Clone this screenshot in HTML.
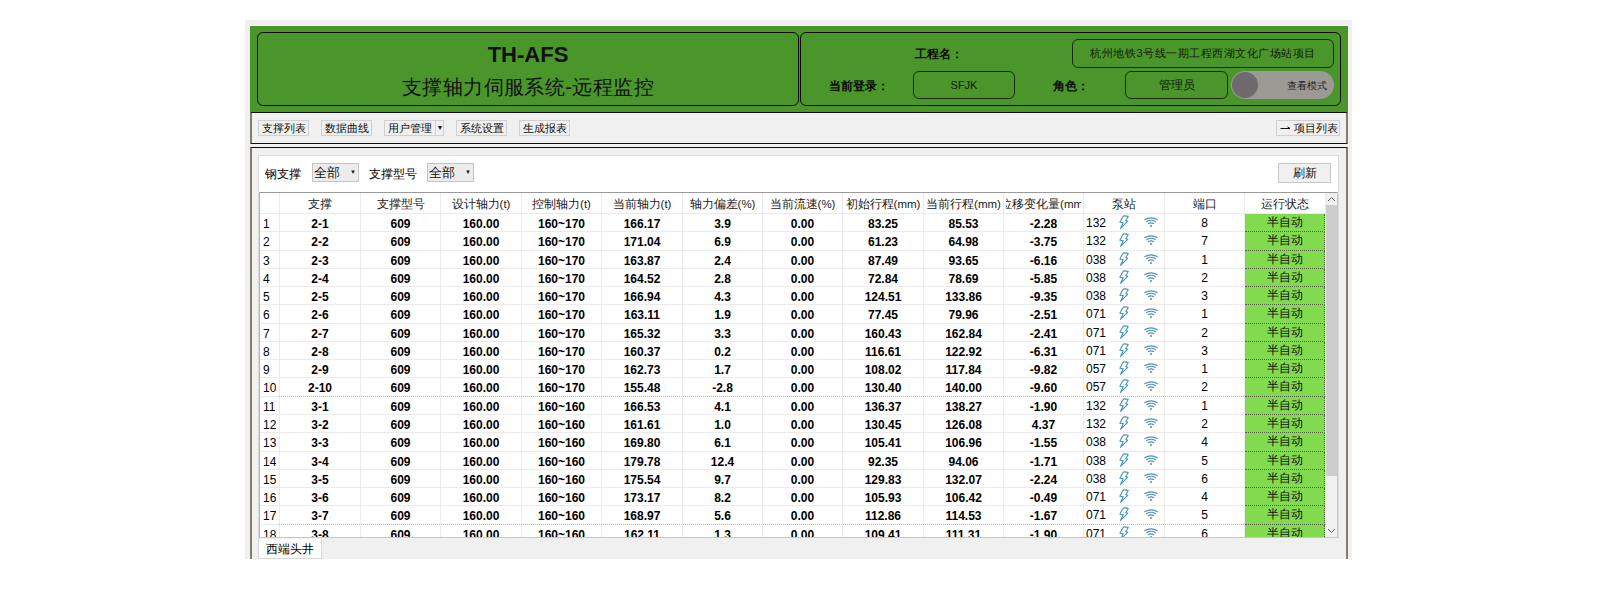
<!DOCTYPE html>
<html><head><meta charset="utf-8">
<style>
*{box-sizing:border-box;margin:0;padding:0}
html,body{width:1600px;height:589px;overflow:hidden;background:#fff;font-family:"Liberation Sans",sans-serif;color:#000}
.a{position:absolute}
.win{left:245px;top:20px;width:1107px;height:539px;background:#f0f0f0}
.green{left:250px;top:25px;width:1098px;height:88px;background:#4a962b;border-top:1px solid #fafafa}
.rbox{border:1.6px solid #0a0a0a;border-radius:6px}
.tbox{border:1px solid #1a2a10;border-radius:6px;text-align:center;font-size:12px;color:#101a0a}
.lbl{font-size:12px;font-weight:bold;color:#0a0a0a;white-space:nowrap}
.btn{height:16px;background:#f0f0f0;border:1px solid #d0d0d0;font-size:11px;line-height:14px;text-align:center;color:#111;white-space:nowrap}
.cell{position:absolute;text-align:center;font-size:12px;white-space:nowrap;overflow:hidden}
.num{font-weight:bold}
.hd{font-size:11.5px;color:#222}
.gl{position:absolute;background:#ebebeb}
svg{display:block}
</style></head><body>
<div class="a win"></div>
<div class="a green"></div>
<div class="a rbox" style="left:257px;top:32px;width:542px;height:74px"></div>
<div class="a rbox" style="left:800px;top:32px;width:541px;height:74px"></div>
<div class="a" style="left:257px;top:42px;width:542px;text-align:center;font-size:22px;font-weight:bold;color:#111">TH-AFS</div>
<div class="a" style="left:257px;top:74px;width:542px;text-align:center;font-size:20px;letter-spacing:0.45px;color:#111">支撑轴力伺服系统-远程监控</div>
<div class="a lbl" style="left:915px;top:46px">工程名：</div>
<div class="a tbox" style="left:1072px;top:39px;width:262px;height:29px;line-height:27px;font-size:11px;letter-spacing:0.5px">杭州地铁3号线一期工程西湖文化广场站项目</div>
<div class="a lbl" style="left:829px;top:78px">当前登录：</div>
<div class="a tbox" style="left:913px;top:71px;width:102px;height:28px;line-height:26px;font-size:11px">SFJK</div>
<div class="a lbl" style="left:1053px;top:78px">角色：</div>
<div class="a tbox" style="left:1125px;top:71px;width:103px;height:28px;line-height:26px">管理员</div>
<div class="a" style="left:1231px;top:71px;width:103px;height:28px;border-radius:14px;background:#9c9a94"></div>
<div class="a" style="left:1232px;top:72px;width:26px;height:26px;border-radius:13px;background:#6e6a6e"></div>
<div class="a" style="left:1287px;top:79px;font-size:10px;color:#222">查看模式</div>

<div class="a" style="left:250px;top:112px;width:1098px;height:32px;border-top:1px solid #101010;border-left:2px solid #857a70;border-bottom:1.5px solid #101010;border-right:2px solid #857a70"></div>
<div class="a btn" style="left:258px;top:120px;width:51px">支撑列表</div>
<div class="a btn" style="left:321px;top:120px;width:51px">数据曲线</div>
<div class="a btn" style="left:384px;top:120px;width:60px;text-align:left;padding-left:3px">用户管理<span style="position:absolute;left:50px;top:0;width:9px;height:14px;border-left:1px solid #d0d0d0;font-size:7px;text-align:center;line-height:14px">&#9660;</span></div>
<div class="a btn" style="left:456px;top:120px;width:51px">系统设置</div>
<div class="a btn" style="left:519px;top:120px;width:51px">生成报表</div>
<div class="a btn" style="left:1276px;top:120px;width:64px"><svg class="a" style="left:3px;top:5px" width="11" height="5" viewBox="0 0 11 5"><path d="M0.5 2.5 H10 M7.5 0.8 L10 2.5" fill="none" stroke="#111" stroke-width="1"/></svg><span class="a" style="left:17px;top:0">项目列表</span></div>

<div class="a" style="left:250px;top:147px;width:1098px;height:412px;border-top:1.5px solid #101010;border-left:2px solid #857a70;border-right:2px solid #857a70"></div>
<div class="a" style="left:258px;top:155px;width:1081px;height:383px;background:#fff;border:1px solid #dcdcdc"></div>
<div class="a" style="left:265px;top:166px;font-size:12px">钢支撑</div>
<div class="a btn" style="left:312px;top:163px;width:47px;height:19px;text-align:left;padding-left:1px;line-height:19px;border-color:#c4c4c4;background:#ececec;font-size:12.5px">全部<span style="position:absolute;right:2px;top:-1px;font-size:6px">&#9660;</span></div>
<div class="a" style="left:369px;top:166px;font-size:12px">支撑型号</div>
<div class="a btn" style="left:427px;top:163px;width:47px;height:19px;text-align:left;padding-left:1px;line-height:19px;border-color:#c4c4c4;background:#ececec;font-size:12.5px">全部<span style="position:absolute;right:2px;top:-1px;font-size:6px">&#9660;</span></div>
<div class="a btn" style="left:1278px;top:163px;width:53px;height:20px;line-height:18px;font-size:12px;border-color:#c8c8c8">刷新</div>

<div class="a" style="left:259px;top:192px;width:1079px;height:345px;overflow:hidden;background:#fff">
<div class="gl" style="left:0;top:0;width:1080px;height:1px;background:#9a9a9a"></div>
<div class="gl" style="left:0;top:0;width:1px;height:400px;background:#b4b4b4"></div>
<div class="gl" style="left:20px;top:1px;width:1px;height:400px"></div>
<div class="gl" style="left:101px;top:1px;width:1px;height:400px"></div>
<div class="gl" style="left:181px;top:1px;width:1px;height:400px"></div>
<div class="gl" style="left:262px;top:1px;width:1px;height:400px"></div>
<div class="gl" style="left:342px;top:1px;width:1px;height:400px"></div>
<div class="gl" style="left:423px;top:1px;width:1px;height:400px"></div>
<div class="gl" style="left:503px;top:1px;width:1px;height:400px"></div>
<div class="gl" style="left:583px;top:1px;width:1px;height:400px"></div>
<div class="gl" style="left:664px;top:1px;width:1px;height:400px"></div>
<div class="gl" style="left:744px;top:1px;width:1px;height:400px"></div>
<div class="gl" style="left:824px;top:1px;width:1px;height:400px"></div>
<div class="gl" style="left:905px;top:1px;width:1px;height:400px"></div>
<div class="gl" style="left:985px;top:1px;width:1px;height:400px"></div>
<div class="gl" style="left:1066px;top:1px;width:1px;height:400px"></div>
<div class="gl" style="left:1px;top:21px;width:1080px;height:1px"></div>
<div class="gl" style="left:1px;top:39px;width:1080px;height:1px"></div>
<div class="gl" style="left:1px;top:58px;width:1080px;height:1px"></div>
<div class="gl" style="left:1px;top:76px;width:1080px;height:1px"></div>
<div class="gl" style="left:1px;top:94px;width:1080px;height:1px"></div>
<div class="gl" style="left:1px;top:112px;width:1080px;height:1px"></div>
<div class="gl" style="left:1px;top:131px;width:1080px;height:1px"></div>
<div class="gl" style="left:1px;top:149px;width:1080px;height:1px"></div>
<div class="gl" style="left:1px;top:167px;width:1080px;height:1px"></div>
<div class="gl" style="left:1px;top:185px;width:1080px;height:1px"></div>
<div class="gl" style="left:1px;top:204px;width:1080px;height:1px"></div>
<div class="gl" style="left:1px;top:222px;width:1080px;height:1px"></div>
<div class="gl" style="left:1px;top:240px;width:1080px;height:1px"></div>
<div class="gl" style="left:1px;top:259px;width:1080px;height:1px"></div>
<div class="gl" style="left:1px;top:277px;width:1080px;height:1px"></div>
<div class="gl" style="left:1px;top:295px;width:1080px;height:1px"></div>
<div class="gl" style="left:1px;top:313px;width:1080px;height:1px"></div>
<div class="gl" style="left:1px;top:332px;width:1080px;height:1px"></div>
<div class="gl" style="left:1px;top:350px;width:1080px;height:1px"></div>
<div class="gl" style="left:20px;top:204px;width:1080px;height:1px;background:repeating-linear-gradient(to right,#b4b4b4 0 1px,#fff 1px 2px)"></div>
<div class="gl" style="left:20px;top:332px;width:1080px;height:1px;background:repeating-linear-gradient(to right,#b4b4b4 0 1px,#fff 1px 2px)"></div>
<div class="cell hd" style="left:23px;top:5px;width:76px;display:flex;justify-content:center">支撑</div>
<div class="cell hd" style="left:104px;top:5px;width:75px;display:flex;justify-content:center">支撑型号</div>
<div class="cell hd" style="left:184px;top:5px;width:76px;display:flex;justify-content:center">设计轴力(t)</div>
<div class="cell hd" style="left:265px;top:5px;width:75px;display:flex;justify-content:center">控制轴力(t)</div>
<div class="cell hd" style="left:345px;top:5px;width:76px;display:flex;justify-content:center">当前轴力(t)</div>
<div class="cell hd" style="left:426px;top:5px;width:75px;display:flex;justify-content:center">轴力偏差(%)</div>
<div class="cell hd" style="left:506px;top:5px;width:75px;display:flex;justify-content:center">当前流速(%)</div>
<div class="cell hd" style="left:586px;top:5px;width:76px;display:flex;justify-content:center">初始行程(mm)</div>
<div class="cell hd" style="left:667px;top:5px;width:75px;display:flex;justify-content:center">当前行程(mm)</div>
<div class="cell hd" style="left:747px;top:5px;width:75px;display:flex;justify-content:center">位移变化量(mm)</div>
<div class="cell hd" style="left:827px;top:5px;width:76px;display:flex;justify-content:center">泵站</div>
<div class="cell hd" style="left:908px;top:5px;width:75px;display:flex;justify-content:center">端口</div>
<div class="cell hd" style="left:988px;top:5px;width:76px;display:flex;justify-content:center">运行状态</div>
<div class="cell" style="left:4px;top:25px;text-align:left">1</div>
<div class="cell num" style="left:21px;top:24.5px;width:80px">2-1</div>
<div class="cell num" style="left:102px;top:24.5px;width:79px">609</div>
<div class="cell num" style="left:182px;top:24.5px;width:80px">160.00</div>
<div class="cell num" style="left:263px;top:24.5px;width:79px">160~170</div>
<div class="cell num" style="left:343px;top:24.5px;width:80px">166.17</div>
<div class="cell num" style="left:424px;top:24.5px;width:79px">3.9</div>
<div class="cell num" style="left:504px;top:24.5px;width:79px">0.00</div>
<div class="cell num" style="left:584px;top:24.5px;width:80px">83.25</div>
<div class="cell num" style="left:665px;top:24.5px;width:79px">85.53</div>
<div class="cell num" style="left:745px;top:24.5px;width:79px">-2.28</div>
<div class="cell" style="left:827px;top:24px;text-align:left">132</div>
<div class="a" style="left:859px;top:22px;width:12px;height:16px"><svg width="12" height="16" viewBox="0 0 12 16"><path d="M5.6 1.9 Q8 1.7 10.3 2.4 L7.8 6.6 L9.7 7.3 L2.5 14.4 L5.3 8.6 L1.9 8.2 Q3.4 4.6 5.6 1.9 Z" fill="none" stroke="#3f90b8" stroke-width="1.05" stroke-linejoin="round"/></svg></div>
<div class="a" style="left:885px;top:25px;width:14px;height:11px"><svg width="14" height="11" viewBox="0 0 14 11"><path d="M0.9 2.6 Q7 -0.8 13.1 2.6 M2.7 4.6 Q7 1.9 11.3 4.6 M4.4 6.5 Q7 5.1 9.6 6.5" fill="none" stroke="#4a90b2" stroke-width="1.2" stroke-linecap="round"/><circle cx="7" cy="9.1" r="1" fill="#4a90b2"/></svg></div>
<div class="cell" style="left:906px;top:24px;width:79px">8</div>
<div class="a" style="left:986px;top:22px;width:80px;height:18px;background:#82da4e;border-bottom:1px dotted #555f48;border-right:1px dotted #4a6a30;font-size:11.5px;text-align:center;line-height:16px;color:#111">半自动</div>
<div class="cell" style="left:4px;top:43px;text-align:left">2</div>
<div class="cell num" style="left:21px;top:42.5px;width:80px">2-2</div>
<div class="cell num" style="left:102px;top:42.5px;width:79px">609</div>
<div class="cell num" style="left:182px;top:42.5px;width:80px">160.00</div>
<div class="cell num" style="left:263px;top:42.5px;width:79px">160~170</div>
<div class="cell num" style="left:343px;top:42.5px;width:80px">171.04</div>
<div class="cell num" style="left:424px;top:42.5px;width:79px">6.9</div>
<div class="cell num" style="left:504px;top:42.5px;width:79px">0.00</div>
<div class="cell num" style="left:584px;top:42.5px;width:80px">61.23</div>
<div class="cell num" style="left:665px;top:42.5px;width:79px">64.98</div>
<div class="cell num" style="left:745px;top:42.5px;width:79px">-3.75</div>
<div class="cell" style="left:827px;top:42px;text-align:left">132</div>
<div class="a" style="left:859px;top:40px;width:12px;height:16px"><svg width="12" height="16" viewBox="0 0 12 16"><path d="M5.6 1.9 Q8 1.7 10.3 2.4 L7.8 6.6 L9.7 7.3 L2.5 14.4 L5.3 8.6 L1.9 8.2 Q3.4 4.6 5.6 1.9 Z" fill="none" stroke="#3f90b8" stroke-width="1.05" stroke-linejoin="round"/></svg></div>
<div class="a" style="left:885px;top:43px;width:14px;height:11px"><svg width="14" height="11" viewBox="0 0 14 11"><path d="M0.9 2.6 Q7 -0.8 13.1 2.6 M2.7 4.6 Q7 1.9 11.3 4.6 M4.4 6.5 Q7 5.1 9.6 6.5" fill="none" stroke="#4a90b2" stroke-width="1.2" stroke-linecap="round"/><circle cx="7" cy="9.1" r="1" fill="#4a90b2"/></svg></div>
<div class="cell" style="left:906px;top:42px;width:79px">7</div>
<div class="a" style="left:986px;top:40px;width:80px;height:19px;background:#82da4e;border-bottom:1px dotted #555f48;border-right:1px dotted #4a6a30;font-size:11.5px;text-align:center;line-height:16px;color:#111">半自动</div>
<div class="cell" style="left:4px;top:62px;text-align:left">3</div>
<div class="cell num" style="left:21px;top:61.5px;width:80px">2-3</div>
<div class="cell num" style="left:102px;top:61.5px;width:79px">609</div>
<div class="cell num" style="left:182px;top:61.5px;width:80px">160.00</div>
<div class="cell num" style="left:263px;top:61.5px;width:79px">160~170</div>
<div class="cell num" style="left:343px;top:61.5px;width:80px">163.87</div>
<div class="cell num" style="left:424px;top:61.5px;width:79px">2.4</div>
<div class="cell num" style="left:504px;top:61.5px;width:79px">0.00</div>
<div class="cell num" style="left:584px;top:61.5px;width:80px">87.49</div>
<div class="cell num" style="left:665px;top:61.5px;width:79px">93.65</div>
<div class="cell num" style="left:745px;top:61.5px;width:79px">-6.16</div>
<div class="cell" style="left:827px;top:61px;text-align:left">038</div>
<div class="a" style="left:859px;top:59px;width:12px;height:16px"><svg width="12" height="16" viewBox="0 0 12 16"><path d="M5.6 1.9 Q8 1.7 10.3 2.4 L7.8 6.6 L9.7 7.3 L2.5 14.4 L5.3 8.6 L1.9 8.2 Q3.4 4.6 5.6 1.9 Z" fill="none" stroke="#3f90b8" stroke-width="1.05" stroke-linejoin="round"/></svg></div>
<div class="a" style="left:885px;top:62px;width:14px;height:11px"><svg width="14" height="11" viewBox="0 0 14 11"><path d="M0.9 2.6 Q7 -0.8 13.1 2.6 M2.7 4.6 Q7 1.9 11.3 4.6 M4.4 6.5 Q7 5.1 9.6 6.5" fill="none" stroke="#4a90b2" stroke-width="1.2" stroke-linecap="round"/><circle cx="7" cy="9.1" r="1" fill="#4a90b2"/></svg></div>
<div class="cell" style="left:906px;top:61px;width:79px">1</div>
<div class="a" style="left:986px;top:59px;width:80px;height:18px;background:#82da4e;border-bottom:1px dotted #555f48;border-right:1px dotted #4a6a30;font-size:11.5px;text-align:center;line-height:16px;color:#111">半自动</div>
<div class="cell" style="left:4px;top:80px;text-align:left">4</div>
<div class="cell num" style="left:21px;top:79.5px;width:80px">2-4</div>
<div class="cell num" style="left:102px;top:79.5px;width:79px">609</div>
<div class="cell num" style="left:182px;top:79.5px;width:80px">160.00</div>
<div class="cell num" style="left:263px;top:79.5px;width:79px">160~170</div>
<div class="cell num" style="left:343px;top:79.5px;width:80px">164.52</div>
<div class="cell num" style="left:424px;top:79.5px;width:79px">2.8</div>
<div class="cell num" style="left:504px;top:79.5px;width:79px">0.00</div>
<div class="cell num" style="left:584px;top:79.5px;width:80px">72.84</div>
<div class="cell num" style="left:665px;top:79.5px;width:79px">78.69</div>
<div class="cell num" style="left:745px;top:79.5px;width:79px">-5.85</div>
<div class="cell" style="left:827px;top:79px;text-align:left">038</div>
<div class="a" style="left:859px;top:77px;width:12px;height:16px"><svg width="12" height="16" viewBox="0 0 12 16"><path d="M5.6 1.9 Q8 1.7 10.3 2.4 L7.8 6.6 L9.7 7.3 L2.5 14.4 L5.3 8.6 L1.9 8.2 Q3.4 4.6 5.6 1.9 Z" fill="none" stroke="#3f90b8" stroke-width="1.05" stroke-linejoin="round"/></svg></div>
<div class="a" style="left:885px;top:80px;width:14px;height:11px"><svg width="14" height="11" viewBox="0 0 14 11"><path d="M0.9 2.6 Q7 -0.8 13.1 2.6 M2.7 4.6 Q7 1.9 11.3 4.6 M4.4 6.5 Q7 5.1 9.6 6.5" fill="none" stroke="#4a90b2" stroke-width="1.2" stroke-linecap="round"/><circle cx="7" cy="9.1" r="1" fill="#4a90b2"/></svg></div>
<div class="cell" style="left:906px;top:79px;width:79px">2</div>
<div class="a" style="left:986px;top:77px;width:80px;height:18px;background:#82da4e;border-bottom:1px dotted #555f48;border-right:1px dotted #4a6a30;font-size:11.5px;text-align:center;line-height:16px;color:#111">半自动</div>
<div class="cell" style="left:4px;top:98px;text-align:left">5</div>
<div class="cell num" style="left:21px;top:97.5px;width:80px">2-5</div>
<div class="cell num" style="left:102px;top:97.5px;width:79px">609</div>
<div class="cell num" style="left:182px;top:97.5px;width:80px">160.00</div>
<div class="cell num" style="left:263px;top:97.5px;width:79px">160~170</div>
<div class="cell num" style="left:343px;top:97.5px;width:80px">166.94</div>
<div class="cell num" style="left:424px;top:97.5px;width:79px">4.3</div>
<div class="cell num" style="left:504px;top:97.5px;width:79px">0.00</div>
<div class="cell num" style="left:584px;top:97.5px;width:80px">124.51</div>
<div class="cell num" style="left:665px;top:97.5px;width:79px">133.86</div>
<div class="cell num" style="left:745px;top:97.5px;width:79px">-9.35</div>
<div class="cell" style="left:827px;top:97px;text-align:left">038</div>
<div class="a" style="left:859px;top:95px;width:12px;height:16px"><svg width="12" height="16" viewBox="0 0 12 16"><path d="M5.6 1.9 Q8 1.7 10.3 2.4 L7.8 6.6 L9.7 7.3 L2.5 14.4 L5.3 8.6 L1.9 8.2 Q3.4 4.6 5.6 1.9 Z" fill="none" stroke="#3f90b8" stroke-width="1.05" stroke-linejoin="round"/></svg></div>
<div class="a" style="left:885px;top:98px;width:14px;height:11px"><svg width="14" height="11" viewBox="0 0 14 11"><path d="M0.9 2.6 Q7 -0.8 13.1 2.6 M2.7 4.6 Q7 1.9 11.3 4.6 M4.4 6.5 Q7 5.1 9.6 6.5" fill="none" stroke="#4a90b2" stroke-width="1.2" stroke-linecap="round"/><circle cx="7" cy="9.1" r="1" fill="#4a90b2"/></svg></div>
<div class="cell" style="left:906px;top:97px;width:79px">3</div>
<div class="a" style="left:986px;top:95px;width:80px;height:18px;background:#82da4e;border-bottom:1px dotted #555f48;border-right:1px dotted #4a6a30;font-size:11.5px;text-align:center;line-height:16px;color:#111">半自动</div>
<div class="cell" style="left:4px;top:116px;text-align:left">6</div>
<div class="cell num" style="left:21px;top:115.5px;width:80px">2-6</div>
<div class="cell num" style="left:102px;top:115.5px;width:79px">609</div>
<div class="cell num" style="left:182px;top:115.5px;width:80px">160.00</div>
<div class="cell num" style="left:263px;top:115.5px;width:79px">160~170</div>
<div class="cell num" style="left:343px;top:115.5px;width:80px">163.11</div>
<div class="cell num" style="left:424px;top:115.5px;width:79px">1.9</div>
<div class="cell num" style="left:504px;top:115.5px;width:79px">0.00</div>
<div class="cell num" style="left:584px;top:115.5px;width:80px">77.45</div>
<div class="cell num" style="left:665px;top:115.5px;width:79px">79.96</div>
<div class="cell num" style="left:745px;top:115.5px;width:79px">-2.51</div>
<div class="cell" style="left:827px;top:115px;text-align:left">071</div>
<div class="a" style="left:859px;top:113px;width:12px;height:16px"><svg width="12" height="16" viewBox="0 0 12 16"><path d="M5.6 1.9 Q8 1.7 10.3 2.4 L7.8 6.6 L9.7 7.3 L2.5 14.4 L5.3 8.6 L1.9 8.2 Q3.4 4.6 5.6 1.9 Z" fill="none" stroke="#3f90b8" stroke-width="1.05" stroke-linejoin="round"/></svg></div>
<div class="a" style="left:885px;top:116px;width:14px;height:11px"><svg width="14" height="11" viewBox="0 0 14 11"><path d="M0.9 2.6 Q7 -0.8 13.1 2.6 M2.7 4.6 Q7 1.9 11.3 4.6 M4.4 6.5 Q7 5.1 9.6 6.5" fill="none" stroke="#4a90b2" stroke-width="1.2" stroke-linecap="round"/><circle cx="7" cy="9.1" r="1" fill="#4a90b2"/></svg></div>
<div class="cell" style="left:906px;top:115px;width:79px">1</div>
<div class="a" style="left:986px;top:113px;width:80px;height:19px;background:#82da4e;border-bottom:1px dotted #555f48;border-right:1px dotted #4a6a30;font-size:11.5px;text-align:center;line-height:16px;color:#111">半自动</div>
<div class="cell" style="left:4px;top:135px;text-align:left">7</div>
<div class="cell num" style="left:21px;top:134.5px;width:80px">2-7</div>
<div class="cell num" style="left:102px;top:134.5px;width:79px">609</div>
<div class="cell num" style="left:182px;top:134.5px;width:80px">160.00</div>
<div class="cell num" style="left:263px;top:134.5px;width:79px">160~170</div>
<div class="cell num" style="left:343px;top:134.5px;width:80px">165.32</div>
<div class="cell num" style="left:424px;top:134.5px;width:79px">3.3</div>
<div class="cell num" style="left:504px;top:134.5px;width:79px">0.00</div>
<div class="cell num" style="left:584px;top:134.5px;width:80px">160.43</div>
<div class="cell num" style="left:665px;top:134.5px;width:79px">162.84</div>
<div class="cell num" style="left:745px;top:134.5px;width:79px">-2.41</div>
<div class="cell" style="left:827px;top:134px;text-align:left">071</div>
<div class="a" style="left:859px;top:132px;width:12px;height:16px"><svg width="12" height="16" viewBox="0 0 12 16"><path d="M5.6 1.9 Q8 1.7 10.3 2.4 L7.8 6.6 L9.7 7.3 L2.5 14.4 L5.3 8.6 L1.9 8.2 Q3.4 4.6 5.6 1.9 Z" fill="none" stroke="#3f90b8" stroke-width="1.05" stroke-linejoin="round"/></svg></div>
<div class="a" style="left:885px;top:135px;width:14px;height:11px"><svg width="14" height="11" viewBox="0 0 14 11"><path d="M0.9 2.6 Q7 -0.8 13.1 2.6 M2.7 4.6 Q7 1.9 11.3 4.6 M4.4 6.5 Q7 5.1 9.6 6.5" fill="none" stroke="#4a90b2" stroke-width="1.2" stroke-linecap="round"/><circle cx="7" cy="9.1" r="1" fill="#4a90b2"/></svg></div>
<div class="cell" style="left:906px;top:134px;width:79px">2</div>
<div class="a" style="left:986px;top:132px;width:80px;height:18px;background:#82da4e;border-bottom:1px dotted #555f48;border-right:1px dotted #4a6a30;font-size:11.5px;text-align:center;line-height:16px;color:#111">半自动</div>
<div class="cell" style="left:4px;top:153px;text-align:left">8</div>
<div class="cell num" style="left:21px;top:152.5px;width:80px">2-8</div>
<div class="cell num" style="left:102px;top:152.5px;width:79px">609</div>
<div class="cell num" style="left:182px;top:152.5px;width:80px">160.00</div>
<div class="cell num" style="left:263px;top:152.5px;width:79px">160~170</div>
<div class="cell num" style="left:343px;top:152.5px;width:80px">160.37</div>
<div class="cell num" style="left:424px;top:152.5px;width:79px">0.2</div>
<div class="cell num" style="left:504px;top:152.5px;width:79px">0.00</div>
<div class="cell num" style="left:584px;top:152.5px;width:80px">116.61</div>
<div class="cell num" style="left:665px;top:152.5px;width:79px">122.92</div>
<div class="cell num" style="left:745px;top:152.5px;width:79px">-6.31</div>
<div class="cell" style="left:827px;top:152px;text-align:left">071</div>
<div class="a" style="left:859px;top:150px;width:12px;height:16px"><svg width="12" height="16" viewBox="0 0 12 16"><path d="M5.6 1.9 Q8 1.7 10.3 2.4 L7.8 6.6 L9.7 7.3 L2.5 14.4 L5.3 8.6 L1.9 8.2 Q3.4 4.6 5.6 1.9 Z" fill="none" stroke="#3f90b8" stroke-width="1.05" stroke-linejoin="round"/></svg></div>
<div class="a" style="left:885px;top:153px;width:14px;height:11px"><svg width="14" height="11" viewBox="0 0 14 11"><path d="M0.9 2.6 Q7 -0.8 13.1 2.6 M2.7 4.6 Q7 1.9 11.3 4.6 M4.4 6.5 Q7 5.1 9.6 6.5" fill="none" stroke="#4a90b2" stroke-width="1.2" stroke-linecap="round"/><circle cx="7" cy="9.1" r="1" fill="#4a90b2"/></svg></div>
<div class="cell" style="left:906px;top:152px;width:79px">3</div>
<div class="a" style="left:986px;top:150px;width:80px;height:18px;background:#82da4e;border-bottom:1px dotted #555f48;border-right:1px dotted #4a6a30;font-size:11.5px;text-align:center;line-height:16px;color:#111">半自动</div>
<div class="cell" style="left:4px;top:171px;text-align:left">9</div>
<div class="cell num" style="left:21px;top:170.5px;width:80px">2-9</div>
<div class="cell num" style="left:102px;top:170.5px;width:79px">609</div>
<div class="cell num" style="left:182px;top:170.5px;width:80px">160.00</div>
<div class="cell num" style="left:263px;top:170.5px;width:79px">160~170</div>
<div class="cell num" style="left:343px;top:170.5px;width:80px">162.73</div>
<div class="cell num" style="left:424px;top:170.5px;width:79px">1.7</div>
<div class="cell num" style="left:504px;top:170.5px;width:79px">0.00</div>
<div class="cell num" style="left:584px;top:170.5px;width:80px">108.02</div>
<div class="cell num" style="left:665px;top:170.5px;width:79px">117.84</div>
<div class="cell num" style="left:745px;top:170.5px;width:79px">-9.82</div>
<div class="cell" style="left:827px;top:170px;text-align:left">057</div>
<div class="a" style="left:859px;top:168px;width:12px;height:16px"><svg width="12" height="16" viewBox="0 0 12 16"><path d="M5.6 1.9 Q8 1.7 10.3 2.4 L7.8 6.6 L9.7 7.3 L2.5 14.4 L5.3 8.6 L1.9 8.2 Q3.4 4.6 5.6 1.9 Z" fill="none" stroke="#3f90b8" stroke-width="1.05" stroke-linejoin="round"/></svg></div>
<div class="a" style="left:885px;top:171px;width:14px;height:11px"><svg width="14" height="11" viewBox="0 0 14 11"><path d="M0.9 2.6 Q7 -0.8 13.1 2.6 M2.7 4.6 Q7 1.9 11.3 4.6 M4.4 6.5 Q7 5.1 9.6 6.5" fill="none" stroke="#4a90b2" stroke-width="1.2" stroke-linecap="round"/><circle cx="7" cy="9.1" r="1" fill="#4a90b2"/></svg></div>
<div class="cell" style="left:906px;top:170px;width:79px">1</div>
<div class="a" style="left:986px;top:168px;width:80px;height:18px;background:#82da4e;border-bottom:1px dotted #555f48;border-right:1px dotted #4a6a30;font-size:11.5px;text-align:center;line-height:16px;color:#111">半自动</div>
<div class="cell" style="left:4px;top:189px;text-align:left">10</div>
<div class="cell num" style="left:21px;top:188.5px;width:80px">2-10</div>
<div class="cell num" style="left:102px;top:188.5px;width:79px">609</div>
<div class="cell num" style="left:182px;top:188.5px;width:80px">160.00</div>
<div class="cell num" style="left:263px;top:188.5px;width:79px">160~170</div>
<div class="cell num" style="left:343px;top:188.5px;width:80px">155.48</div>
<div class="cell num" style="left:424px;top:188.5px;width:79px">-2.8</div>
<div class="cell num" style="left:504px;top:188.5px;width:79px">0.00</div>
<div class="cell num" style="left:584px;top:188.5px;width:80px">130.40</div>
<div class="cell num" style="left:665px;top:188.5px;width:79px">140.00</div>
<div class="cell num" style="left:745px;top:188.5px;width:79px">-9.60</div>
<div class="cell" style="left:827px;top:188px;text-align:left">057</div>
<div class="a" style="left:859px;top:186px;width:12px;height:16px"><svg width="12" height="16" viewBox="0 0 12 16"><path d="M5.6 1.9 Q8 1.7 10.3 2.4 L7.8 6.6 L9.7 7.3 L2.5 14.4 L5.3 8.6 L1.9 8.2 Q3.4 4.6 5.6 1.9 Z" fill="none" stroke="#3f90b8" stroke-width="1.05" stroke-linejoin="round"/></svg></div>
<div class="a" style="left:885px;top:189px;width:14px;height:11px"><svg width="14" height="11" viewBox="0 0 14 11"><path d="M0.9 2.6 Q7 -0.8 13.1 2.6 M2.7 4.6 Q7 1.9 11.3 4.6 M4.4 6.5 Q7 5.1 9.6 6.5" fill="none" stroke="#4a90b2" stroke-width="1.2" stroke-linecap="round"/><circle cx="7" cy="9.1" r="1" fill="#4a90b2"/></svg></div>
<div class="cell" style="left:906px;top:188px;width:79px">2</div>
<div class="a" style="left:986px;top:186px;width:80px;height:19px;background:#82da4e;border-bottom:1px dotted #555f48;border-right:1px dotted #4a6a30;font-size:11.5px;text-align:center;line-height:16px;color:#111">半自动</div>
<div class="cell" style="left:4px;top:208px;text-align:left">11</div>
<div class="cell num" style="left:21px;top:207.5px;width:80px">3-1</div>
<div class="cell num" style="left:102px;top:207.5px;width:79px">609</div>
<div class="cell num" style="left:182px;top:207.5px;width:80px">160.00</div>
<div class="cell num" style="left:263px;top:207.5px;width:79px">160~160</div>
<div class="cell num" style="left:343px;top:207.5px;width:80px">166.53</div>
<div class="cell num" style="left:424px;top:207.5px;width:79px">4.1</div>
<div class="cell num" style="left:504px;top:207.5px;width:79px">0.00</div>
<div class="cell num" style="left:584px;top:207.5px;width:80px">136.37</div>
<div class="cell num" style="left:665px;top:207.5px;width:79px">138.27</div>
<div class="cell num" style="left:745px;top:207.5px;width:79px">-1.90</div>
<div class="cell" style="left:827px;top:207px;text-align:left">132</div>
<div class="a" style="left:859px;top:205px;width:12px;height:16px"><svg width="12" height="16" viewBox="0 0 12 16"><path d="M5.6 1.9 Q8 1.7 10.3 2.4 L7.8 6.6 L9.7 7.3 L2.5 14.4 L5.3 8.6 L1.9 8.2 Q3.4 4.6 5.6 1.9 Z" fill="none" stroke="#3f90b8" stroke-width="1.05" stroke-linejoin="round"/></svg></div>
<div class="a" style="left:885px;top:208px;width:14px;height:11px"><svg width="14" height="11" viewBox="0 0 14 11"><path d="M0.9 2.6 Q7 -0.8 13.1 2.6 M2.7 4.6 Q7 1.9 11.3 4.6 M4.4 6.5 Q7 5.1 9.6 6.5" fill="none" stroke="#4a90b2" stroke-width="1.2" stroke-linecap="round"/><circle cx="7" cy="9.1" r="1" fill="#4a90b2"/></svg></div>
<div class="cell" style="left:906px;top:207px;width:79px">1</div>
<div class="a" style="left:986px;top:205px;width:80px;height:18px;background:#82da4e;border-bottom:1px dotted #555f48;border-right:1px dotted #4a6a30;font-size:11.5px;text-align:center;line-height:16px;color:#111">半自动</div>
<div class="cell" style="left:4px;top:226px;text-align:left">12</div>
<div class="cell num" style="left:21px;top:225.5px;width:80px">3-2</div>
<div class="cell num" style="left:102px;top:225.5px;width:79px">609</div>
<div class="cell num" style="left:182px;top:225.5px;width:80px">160.00</div>
<div class="cell num" style="left:263px;top:225.5px;width:79px">160~160</div>
<div class="cell num" style="left:343px;top:225.5px;width:80px">161.61</div>
<div class="cell num" style="left:424px;top:225.5px;width:79px">1.0</div>
<div class="cell num" style="left:504px;top:225.5px;width:79px">0.00</div>
<div class="cell num" style="left:584px;top:225.5px;width:80px">130.45</div>
<div class="cell num" style="left:665px;top:225.5px;width:79px">126.08</div>
<div class="cell num" style="left:745px;top:225.5px;width:79px">4.37</div>
<div class="cell" style="left:827px;top:225px;text-align:left">132</div>
<div class="a" style="left:859px;top:223px;width:12px;height:16px"><svg width="12" height="16" viewBox="0 0 12 16"><path d="M5.6 1.9 Q8 1.7 10.3 2.4 L7.8 6.6 L9.7 7.3 L2.5 14.4 L5.3 8.6 L1.9 8.2 Q3.4 4.6 5.6 1.9 Z" fill="none" stroke="#3f90b8" stroke-width="1.05" stroke-linejoin="round"/></svg></div>
<div class="a" style="left:885px;top:226px;width:14px;height:11px"><svg width="14" height="11" viewBox="0 0 14 11"><path d="M0.9 2.6 Q7 -0.8 13.1 2.6 M2.7 4.6 Q7 1.9 11.3 4.6 M4.4 6.5 Q7 5.1 9.6 6.5" fill="none" stroke="#4a90b2" stroke-width="1.2" stroke-linecap="round"/><circle cx="7" cy="9.1" r="1" fill="#4a90b2"/></svg></div>
<div class="cell" style="left:906px;top:225px;width:79px">2</div>
<div class="a" style="left:986px;top:223px;width:80px;height:18px;background:#82da4e;border-bottom:1px dotted #555f48;border-right:1px dotted #4a6a30;font-size:11.5px;text-align:center;line-height:16px;color:#111">半自动</div>
<div class="cell" style="left:4px;top:244px;text-align:left">13</div>
<div class="cell num" style="left:21px;top:243.5px;width:80px">3-3</div>
<div class="cell num" style="left:102px;top:243.5px;width:79px">609</div>
<div class="cell num" style="left:182px;top:243.5px;width:80px">160.00</div>
<div class="cell num" style="left:263px;top:243.5px;width:79px">160~160</div>
<div class="cell num" style="left:343px;top:243.5px;width:80px">169.80</div>
<div class="cell num" style="left:424px;top:243.5px;width:79px">6.1</div>
<div class="cell num" style="left:504px;top:243.5px;width:79px">0.00</div>
<div class="cell num" style="left:584px;top:243.5px;width:80px">105.41</div>
<div class="cell num" style="left:665px;top:243.5px;width:79px">106.96</div>
<div class="cell num" style="left:745px;top:243.5px;width:79px">-1.55</div>
<div class="cell" style="left:827px;top:243px;text-align:left">038</div>
<div class="a" style="left:859px;top:241px;width:12px;height:16px"><svg width="12" height="16" viewBox="0 0 12 16"><path d="M5.6 1.9 Q8 1.7 10.3 2.4 L7.8 6.6 L9.7 7.3 L2.5 14.4 L5.3 8.6 L1.9 8.2 Q3.4 4.6 5.6 1.9 Z" fill="none" stroke="#3f90b8" stroke-width="1.05" stroke-linejoin="round"/></svg></div>
<div class="a" style="left:885px;top:244px;width:14px;height:11px"><svg width="14" height="11" viewBox="0 0 14 11"><path d="M0.9 2.6 Q7 -0.8 13.1 2.6 M2.7 4.6 Q7 1.9 11.3 4.6 M4.4 6.5 Q7 5.1 9.6 6.5" fill="none" stroke="#4a90b2" stroke-width="1.2" stroke-linecap="round"/><circle cx="7" cy="9.1" r="1" fill="#4a90b2"/></svg></div>
<div class="cell" style="left:906px;top:243px;width:79px">4</div>
<div class="a" style="left:986px;top:241px;width:80px;height:19px;background:#82da4e;border-bottom:1px dotted #555f48;border-right:1px dotted #4a6a30;font-size:11.5px;text-align:center;line-height:16px;color:#111">半自动</div>
<div class="cell" style="left:4px;top:263px;text-align:left">14</div>
<div class="cell num" style="left:21px;top:262.5px;width:80px">3-4</div>
<div class="cell num" style="left:102px;top:262.5px;width:79px">609</div>
<div class="cell num" style="left:182px;top:262.5px;width:80px">160.00</div>
<div class="cell num" style="left:263px;top:262.5px;width:79px">160~160</div>
<div class="cell num" style="left:343px;top:262.5px;width:80px">179.78</div>
<div class="cell num" style="left:424px;top:262.5px;width:79px">12.4</div>
<div class="cell num" style="left:504px;top:262.5px;width:79px">0.00</div>
<div class="cell num" style="left:584px;top:262.5px;width:80px">92.35</div>
<div class="cell num" style="left:665px;top:262.5px;width:79px">94.06</div>
<div class="cell num" style="left:745px;top:262.5px;width:79px">-1.71</div>
<div class="cell" style="left:827px;top:262px;text-align:left">038</div>
<div class="a" style="left:859px;top:260px;width:12px;height:16px"><svg width="12" height="16" viewBox="0 0 12 16"><path d="M5.6 1.9 Q8 1.7 10.3 2.4 L7.8 6.6 L9.7 7.3 L2.5 14.4 L5.3 8.6 L1.9 8.2 Q3.4 4.6 5.6 1.9 Z" fill="none" stroke="#3f90b8" stroke-width="1.05" stroke-linejoin="round"/></svg></div>
<div class="a" style="left:885px;top:263px;width:14px;height:11px"><svg width="14" height="11" viewBox="0 0 14 11"><path d="M0.9 2.6 Q7 -0.8 13.1 2.6 M2.7 4.6 Q7 1.9 11.3 4.6 M4.4 6.5 Q7 5.1 9.6 6.5" fill="none" stroke="#4a90b2" stroke-width="1.2" stroke-linecap="round"/><circle cx="7" cy="9.1" r="1" fill="#4a90b2"/></svg></div>
<div class="cell" style="left:906px;top:262px;width:79px">5</div>
<div class="a" style="left:986px;top:260px;width:80px;height:18px;background:#82da4e;border-bottom:1px dotted #555f48;border-right:1px dotted #4a6a30;font-size:11.5px;text-align:center;line-height:16px;color:#111">半自动</div>
<div class="cell" style="left:4px;top:281px;text-align:left">15</div>
<div class="cell num" style="left:21px;top:280.5px;width:80px">3-5</div>
<div class="cell num" style="left:102px;top:280.5px;width:79px">609</div>
<div class="cell num" style="left:182px;top:280.5px;width:80px">160.00</div>
<div class="cell num" style="left:263px;top:280.5px;width:79px">160~160</div>
<div class="cell num" style="left:343px;top:280.5px;width:80px">175.54</div>
<div class="cell num" style="left:424px;top:280.5px;width:79px">9.7</div>
<div class="cell num" style="left:504px;top:280.5px;width:79px">0.00</div>
<div class="cell num" style="left:584px;top:280.5px;width:80px">129.83</div>
<div class="cell num" style="left:665px;top:280.5px;width:79px">132.07</div>
<div class="cell num" style="left:745px;top:280.5px;width:79px">-2.24</div>
<div class="cell" style="left:827px;top:280px;text-align:left">038</div>
<div class="a" style="left:859px;top:278px;width:12px;height:16px"><svg width="12" height="16" viewBox="0 0 12 16"><path d="M5.6 1.9 Q8 1.7 10.3 2.4 L7.8 6.6 L9.7 7.3 L2.5 14.4 L5.3 8.6 L1.9 8.2 Q3.4 4.6 5.6 1.9 Z" fill="none" stroke="#3f90b8" stroke-width="1.05" stroke-linejoin="round"/></svg></div>
<div class="a" style="left:885px;top:281px;width:14px;height:11px"><svg width="14" height="11" viewBox="0 0 14 11"><path d="M0.9 2.6 Q7 -0.8 13.1 2.6 M2.7 4.6 Q7 1.9 11.3 4.6 M4.4 6.5 Q7 5.1 9.6 6.5" fill="none" stroke="#4a90b2" stroke-width="1.2" stroke-linecap="round"/><circle cx="7" cy="9.1" r="1" fill="#4a90b2"/></svg></div>
<div class="cell" style="left:906px;top:280px;width:79px">6</div>
<div class="a" style="left:986px;top:278px;width:80px;height:18px;background:#82da4e;border-bottom:1px dotted #555f48;border-right:1px dotted #4a6a30;font-size:11.5px;text-align:center;line-height:16px;color:#111">半自动</div>
<div class="cell" style="left:4px;top:299px;text-align:left">16</div>
<div class="cell num" style="left:21px;top:298.5px;width:80px">3-6</div>
<div class="cell num" style="left:102px;top:298.5px;width:79px">609</div>
<div class="cell num" style="left:182px;top:298.5px;width:80px">160.00</div>
<div class="cell num" style="left:263px;top:298.5px;width:79px">160~160</div>
<div class="cell num" style="left:343px;top:298.5px;width:80px">173.17</div>
<div class="cell num" style="left:424px;top:298.5px;width:79px">8.2</div>
<div class="cell num" style="left:504px;top:298.5px;width:79px">0.00</div>
<div class="cell num" style="left:584px;top:298.5px;width:80px">105.93</div>
<div class="cell num" style="left:665px;top:298.5px;width:79px">106.42</div>
<div class="cell num" style="left:745px;top:298.5px;width:79px">-0.49</div>
<div class="cell" style="left:827px;top:298px;text-align:left">071</div>
<div class="a" style="left:859px;top:296px;width:12px;height:16px"><svg width="12" height="16" viewBox="0 0 12 16"><path d="M5.6 1.9 Q8 1.7 10.3 2.4 L7.8 6.6 L9.7 7.3 L2.5 14.4 L5.3 8.6 L1.9 8.2 Q3.4 4.6 5.6 1.9 Z" fill="none" stroke="#3f90b8" stroke-width="1.05" stroke-linejoin="round"/></svg></div>
<div class="a" style="left:885px;top:299px;width:14px;height:11px"><svg width="14" height="11" viewBox="0 0 14 11"><path d="M0.9 2.6 Q7 -0.8 13.1 2.6 M2.7 4.6 Q7 1.9 11.3 4.6 M4.4 6.5 Q7 5.1 9.6 6.5" fill="none" stroke="#4a90b2" stroke-width="1.2" stroke-linecap="round"/><circle cx="7" cy="9.1" r="1" fill="#4a90b2"/></svg></div>
<div class="cell" style="left:906px;top:298px;width:79px">4</div>
<div class="a" style="left:986px;top:296px;width:80px;height:18px;background:#82da4e;border-bottom:1px dotted #555f48;border-right:1px dotted #4a6a30;font-size:11.5px;text-align:center;line-height:16px;color:#111">半自动</div>
<div class="cell" style="left:4px;top:317px;text-align:left">17</div>
<div class="cell num" style="left:21px;top:316.5px;width:80px">3-7</div>
<div class="cell num" style="left:102px;top:316.5px;width:79px">609</div>
<div class="cell num" style="left:182px;top:316.5px;width:80px">160.00</div>
<div class="cell num" style="left:263px;top:316.5px;width:79px">160~160</div>
<div class="cell num" style="left:343px;top:316.5px;width:80px">168.97</div>
<div class="cell num" style="left:424px;top:316.5px;width:79px">5.6</div>
<div class="cell num" style="left:504px;top:316.5px;width:79px">0.00</div>
<div class="cell num" style="left:584px;top:316.5px;width:80px">112.86</div>
<div class="cell num" style="left:665px;top:316.5px;width:79px">114.53</div>
<div class="cell num" style="left:745px;top:316.5px;width:79px">-1.67</div>
<div class="cell" style="left:827px;top:316px;text-align:left">071</div>
<div class="a" style="left:859px;top:314px;width:12px;height:16px"><svg width="12" height="16" viewBox="0 0 12 16"><path d="M5.6 1.9 Q8 1.7 10.3 2.4 L7.8 6.6 L9.7 7.3 L2.5 14.4 L5.3 8.6 L1.9 8.2 Q3.4 4.6 5.6 1.9 Z" fill="none" stroke="#3f90b8" stroke-width="1.05" stroke-linejoin="round"/></svg></div>
<div class="a" style="left:885px;top:317px;width:14px;height:11px"><svg width="14" height="11" viewBox="0 0 14 11"><path d="M0.9 2.6 Q7 -0.8 13.1 2.6 M2.7 4.6 Q7 1.9 11.3 4.6 M4.4 6.5 Q7 5.1 9.6 6.5" fill="none" stroke="#4a90b2" stroke-width="1.2" stroke-linecap="round"/><circle cx="7" cy="9.1" r="1" fill="#4a90b2"/></svg></div>
<div class="cell" style="left:906px;top:316px;width:79px">5</div>
<div class="a" style="left:986px;top:314px;width:80px;height:19px;background:#82da4e;border-bottom:1px dotted #555f48;border-right:1px dotted #4a6a30;font-size:11.5px;text-align:center;line-height:16px;color:#111">半自动</div>
<div class="cell" style="left:4px;top:336px;text-align:left">18</div>
<div class="cell num" style="left:21px;top:335.5px;width:80px">3-8</div>
<div class="cell num" style="left:102px;top:335.5px;width:79px">609</div>
<div class="cell num" style="left:182px;top:335.5px;width:80px">160.00</div>
<div class="cell num" style="left:263px;top:335.5px;width:79px">160~160</div>
<div class="cell num" style="left:343px;top:335.5px;width:80px">162.11</div>
<div class="cell num" style="left:424px;top:335.5px;width:79px">1.3</div>
<div class="cell num" style="left:504px;top:335.5px;width:79px">0.00</div>
<div class="cell num" style="left:584px;top:335.5px;width:80px">109.41</div>
<div class="cell num" style="left:665px;top:335.5px;width:79px">111.31</div>
<div class="cell num" style="left:745px;top:335.5px;width:79px">-1.90</div>
<div class="cell" style="left:827px;top:335px;text-align:left">071</div>
<div class="a" style="left:859px;top:333px;width:12px;height:16px"><svg width="12" height="16" viewBox="0 0 12 16"><path d="M5.6 1.9 Q8 1.7 10.3 2.4 L7.8 6.6 L9.7 7.3 L2.5 14.4 L5.3 8.6 L1.9 8.2 Q3.4 4.6 5.6 1.9 Z" fill="none" stroke="#3f90b8" stroke-width="1.05" stroke-linejoin="round"/></svg></div>
<div class="a" style="left:885px;top:336px;width:14px;height:11px"><svg width="14" height="11" viewBox="0 0 14 11"><path d="M0.9 2.6 Q7 -0.8 13.1 2.6 M2.7 4.6 Q7 1.9 11.3 4.6 M4.4 6.5 Q7 5.1 9.6 6.5" fill="none" stroke="#4a90b2" stroke-width="1.2" stroke-linecap="round"/><circle cx="7" cy="9.1" r="1" fill="#4a90b2"/></svg></div>
<div class="cell" style="left:906px;top:335px;width:79px">6</div>
<div class="a" style="left:986px;top:333px;width:80px;height:18px;background:#82da4e;border-bottom:1px dotted #555f48;border-right:1px dotted #4a6a30;font-size:11.5px;text-align:center;line-height:16px;color:#111">半自动</div>
<div class="a" style="left:1067px;top:1px;width:11px;height:400px;background:#f0f0f0"></div>
<div class="a" style="left:1067px;top:13px;width:11px;height:271px;background:#cdcdcd"></div>
<svg class="a" style="left:1068px;top:4px" width="9" height="6" viewBox="0 0 9 6"><path d="M1 5 L4.5 1.5 L8 5" fill="none" stroke="#606060" stroke-width="1"/></svg>
<svg class="a" style="left:1068px;top:336px" width="9" height="6" viewBox="0 0 9 6"><path d="M1 1 L4.5 4.5 L8 1" fill="none" stroke="#606060" stroke-width="1"/></svg>
<div class="gl" style="left:1078px;top:0;width:1px;height:400px;background:#c8c8c8"></div>
</div>
<div class="a" style="left:258px;top:537px;width:1080px;height:1px;background:#c8c8c8"></div>
<div class="a" style="left:258px;top:539px;width:64px;height:20px;background:#fff;border:1px solid #d8d8d8;border-top:none;font-size:11.5px;text-align:center;line-height:21px">西端头井</div>
</body></html>
